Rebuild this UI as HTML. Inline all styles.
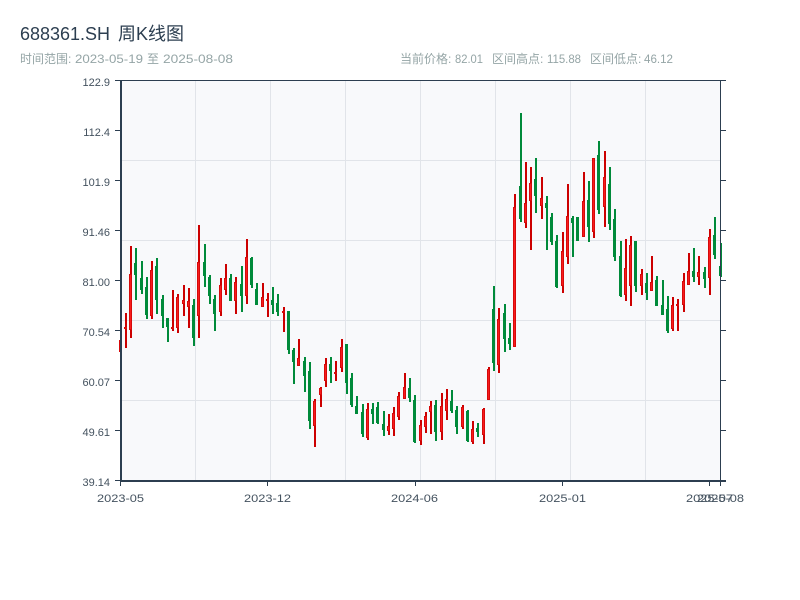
<!DOCTYPE html>
<html lang="zh"><head><meta charset="utf-8"><title>688361.SH 周K线图</title>
<style>html,body{margin:0;padding:0;background:#fff}svg{display:block}text{font-family:"Liberation Sans","Noto Sans CJK SC",sans-serif}</style>
</head><body>
<svg width="800" height="600" viewBox="0 0 800 600" xmlns="http://www.w3.org/2000/svg">
<rect width="800" height="600" fill="#fff"/>
<g fill="#2c3e50" font-size="18"><text x="20" y="40" textLength="90" lengthAdjust="spacingAndGlyphs">688361.SH</text><text x="118" y="40">周</text><text x="136" y="40">K</text><text x="148" y="40">线图</text></g>
<g fill="#95a5a6" font-size="12">
<text x="20" y="63">时间范围:</text><text x="75" y="63" textLength="68" lengthAdjust="spacingAndGlyphs">2023-05-19</text><text x="147" y="63">至</text><text x="163" y="63" textLength="70" lengthAdjust="spacingAndGlyphs">2025-08-08</text>
<text x="400" y="63">当前价格:</text><text x="455" y="63" textLength="28" lengthAdjust="spacingAndGlyphs">82.01</text><text x="492" y="63">区间高点:</text><text x="547" y="63" textLength="34" lengthAdjust="spacingAndGlyphs">115.88</text><text x="590" y="63">区间低点:</text><text x="644" y="63" textLength="29" lengthAdjust="spacingAndGlyphs">46.12</text>
</g>
<rect x="121" y="81" width="599" height="400" fill="#f8f9fb"/>
<g shape-rendering="crispEdges" fill="#e1e4e9"><rect x="195" y="81" width="1" height="400"/><rect x="270" y="81" width="1" height="400"/><rect x="345" y="81" width="1" height="400"/><rect x="420" y="81" width="1" height="400"/><rect x="495" y="81" width="1" height="400"/><rect x="570" y="81" width="1" height="400"/><rect x="645" y="81" width="1" height="400"/><rect x="122" y="160" width="598" height="1"/><rect x="122" y="240" width="598" height="1"/><rect x="122" y="320" width="598" height="1"/><rect x="122" y="400" width="598" height="1"/></g>
<g fill="none" shape-rendering="crispEdges">
<path stroke="#cc0000" stroke-width="2" d="M126 313V348M131 246V338M152 261V319M173 290V331M178 294V333M184 285V316M189 288V328M199 225V338M221 278V316M226 264V295M236 277V314M247 239V304M263 283V307M268 293V317M284 307V332M299 339V366M315 399V447M321 387V407M326 358V387M336 361V381M342 339V372M368 403V440M389 414V435M394 407V436M399 392V420M405 373V399M421 420V445M426 412V433M431 401V434M442 393V440M447 389V420M463 405V429M473 421V444M484 408V444M489 367V400M499 308V373M515 194V347M526 162V228M531 167V250M542 177V219M563 232V293M568 184V264M584 172V237M594 158V238M605 151V227M626 239V301M631 236V306M642 269V295M652 256V291M673 297V331M678 299V331M684 273V312M689 253V285M699 256V285M710 229V295"/>
<path stroke="#d60a0a" stroke-width="3" d="M120.5 340V352M125.5 327V329M130.5 274V330M151.5 270V316M172.5 327V329M177.5 297V328M183.5 300V304M188.5 301V307M198.5 262V316M220.5 285V312M225.5 278V290M235.5 282V301M246.5 257V296M262.5 297V307M267.5 299V301M283.5 311V313M298.5 358V366M314.5 401V426M320.5 388V395M325.5 364V381M335.5 372V374M341.5 347V368M367.5 409V438M388.5 426V431M393.5 413V429M398.5 396V417M404.5 387V399M420.5 425V441M425.5 416V427M430.5 406V412M441.5 406V432M446.5 399V411M462.5 407V427M472.5 429V442M483.5 409V435M488.5 369V400M498.5 319V365M514.5 207V347M525.5 203V223M530.5 183V201M541.5 198V206M562.5 251V286M567.5 216V257M583.5 201V237M593.5 158V232M604.5 177V207M625.5 268V295M630.5 245V286M641.5 274V286M651.5 282V291M672.5 305V329M677.5 304V306M683.5 281V305M688.5 271V285M698.5 272V277M709.5 237V278"/>
<path stroke="#f81c1c" stroke-width="1" d="M130.5 275V329M151.5 271V315M177.5 298V327M183.5 301V303M188.5 302V306M198.5 263V315M220.5 286V311M225.5 279V289M235.5 283V300M246.5 258V295M262.5 298V306M298.5 359V365M314.5 402V425M320.5 389V394M325.5 365V380M341.5 348V367M367.5 410V437M388.5 427V430M393.5 414V428M398.5 397V416M404.5 388V398M420.5 426V440M425.5 417V426M430.5 407V411M441.5 407V431M446.5 400V410M462.5 408V426M472.5 430V441M483.5 410V434M488.5 370V399M498.5 320V364M514.5 208V346M525.5 204V222M530.5 184V200M541.5 199V205M562.5 252V285M567.5 217V256M583.5 202V236M593.5 159V231M604.5 178V206M625.5 269V294M630.5 246V285M641.5 275V285M651.5 283V290M672.5 306V328M683.5 282V304M688.5 272V284M698.5 273V276M709.5 238V277"/>
<path stroke="#008a3a" stroke-width="2" d="M136 248V300M142 261V294M147 277V319M157 258V314M163 295V328M168 318V342M194 299V346M205 244V287M210 275V304M215 295V331M231 274V301M242 266V312M252 257V288M257 283V305M273 287V314M278 294V316M289 311V354M294 348V384M305 357V392M310 362V429M331 357V383M347 344V394M352 373V407M357 396V414M363 404V437M373 403V424M378 402V424M384 411V436M410 378V402M415 395V443M436 400V441M452 390V413M457 406V434M468 410V442M478 423V437M494 286V371M505 304V352M510 323V350M521 113V222M536 158V213M547 196V250M552 213V245M557 235V288M573 216V257M578 217V241M589 181V242M599 141V214M610 167V230M615 209V261M621 241V297M636 241V292M647 273V300M657 276V306M663 280V315M668 296V333M694 248V282M705 267V288M715 217V259M721 243V277"/>
<path stroke="#008a3a" stroke-width="3" d="M135.5 263V275M141.5 278V290M146.5 287V315M156.5 266V300M162.5 299V316M167.5 318V327M193.5 305V338M204.5 262V276M209.5 277V296M214.5 299V314M230.5 278V301M241.5 284V296M251.5 258V285M256.5 289V305M272.5 300V305M277.5 303V312M288.5 311V350M293.5 350V362M304.5 361V376M309.5 371V421M330.5 364V371M346.5 344V383M351.5 378V405M356.5 406V414M362.5 412V434M372.5 409V414M377.5 407V423M383.5 424V430M409.5 388V398M414.5 400V442M435.5 405V432M451.5 401V411M456.5 410V427M467.5 411V441M477.5 428V432M493.5 309V363M504.5 313V339M509.5 338V344M520.5 186V219M535.5 179V196M546.5 203V208M551.5 217V242M556.5 241V287M572.5 218V223M577.5 217V241M588.5 200V227M598.5 155V210M609.5 184V224M614.5 219V257M620.5 256V296M635.5 241V286M646.5 283V293M656.5 280V306M662.5 305V315M667.5 309V331M693.5 271V277M704.5 272V279M714.5 235V255M720.5 266V276"/>
</g>
<g fill="#2c3e50" shape-rendering="crispEdges">
<rect x="115" y="80" width="611" height="1"/>
<rect x="120" y="80" width="2" height="402"/>
<rect x="120" y="480" width="606" height="2"/>
<rect x="720" y="80" width="1" height="402"/>
<path d="M115 130h5v1h-5zM115 180h5v1h-5zM115 230h5v1h-5zM115 280h5v1h-5zM115 330h5v1h-5zM115 380h5v1h-5zM115 430h5v1h-5zM115 480h5v1h-5zM721 130h5v1h-5zM721 180h5v1h-5zM721 230h5v1h-5zM721 280h5v1h-5zM721 330h5v1h-5zM721 380h5v1h-5zM721 430h5v1h-5z"/>
<path d="M120 482h1v4h-1zM267 482h1v4h-1zM415 482h1v4h-1zM562 482h1v4h-1zM709 482h1v4h-1zM720 482h1v4h-1z"/>
</g>
<g fill="#44525f" font-size="11" text-anchor="end">
<text x="110" y="86">122.9</text><text x="110" y="136">112.4</text><text x="110" y="186">101.9</text><text x="110" y="236">91.46</text><text x="110" y="286">81.00</text><text x="110" y="336">70.54</text><text x="110" y="386">60.07</text><text x="110" y="436">49.61</text><text x="110" y="486">39.14</text>
</g>
<g fill="#44525f" font-size="11">
<text x="97" y="502" textLength="47" lengthAdjust="spacingAndGlyphs">2023-05</text><text x="244" y="502" textLength="47" lengthAdjust="spacingAndGlyphs">2023-12</text><text x="391" y="502" textLength="47" lengthAdjust="spacingAndGlyphs">2024-06</text><text x="539" y="502" textLength="47" lengthAdjust="spacingAndGlyphs">2025-01</text><text x="686" y="502" textLength="47" lengthAdjust="spacingAndGlyphs">2025-07</text><text x="697" y="502" textLength="47" lengthAdjust="spacingAndGlyphs">2025-08</text>
</g>
</svg>
</body></html>
